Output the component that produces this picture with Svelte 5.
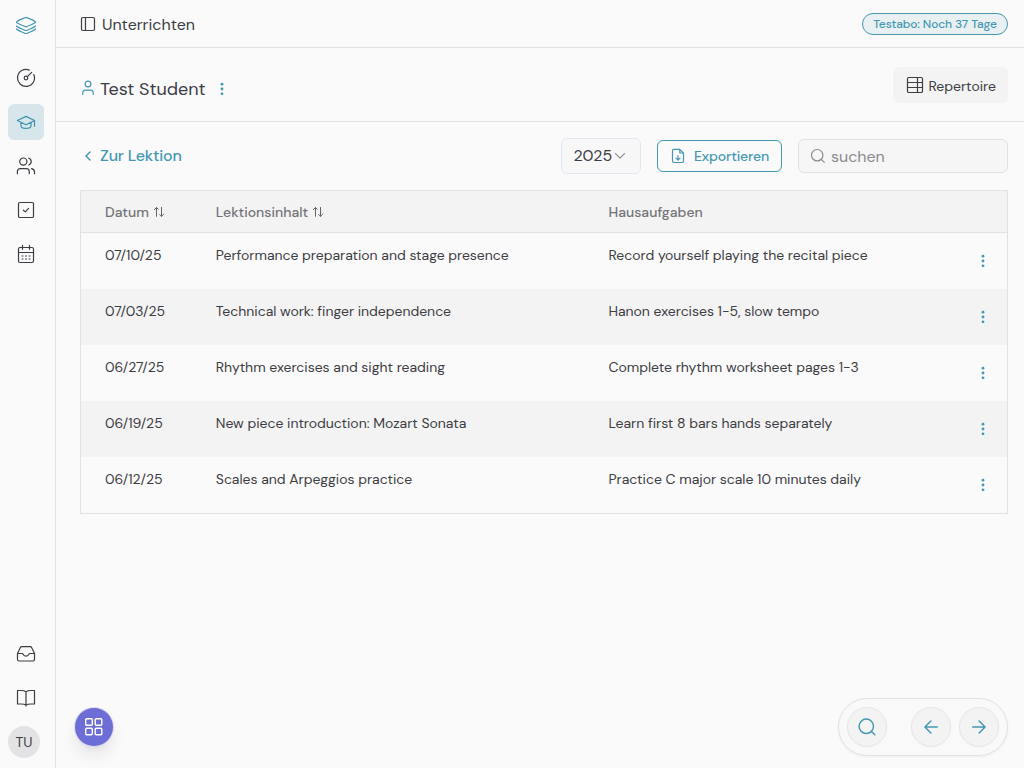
<script>
  const rows = [
    ['07/10/25', 'Performance preparation and stage presence', 'Record yourself playing the recital piece'],
    ['07/03/25', 'Technical work: finger independence', 'Hanon exercises 1-5, slow tempo'],
    ['06/27/25', 'Rhythm exercises and sight reading', 'Complete rhythm worksheet pages 1-3'],
    ['06/19/25', 'New piece introduction: Mozart Sonata', 'Learn first 8 bars hands separately'],
    ['06/12/25', 'Scales and Arpeggios practice', 'Practice C major scale 10 minutes daily']
  ];
</script>

{#snippet dots()}
  <svg class="dots" width="4" height="14" viewBox="0 0 4 14"><circle cx="2" cy="2.2" r="1.400" /><circle cx="2" cy="7" r="1.400" /><circle cx="2" cy="11.8" r="1.400" /></svg>
{/snippet}

{#snippet sort()}
  <svg class="ico sort" width="12" height="12" viewBox="0 0 12 12"><path d="M3.500 10.300V1.500M1.300 3.700 3.500 1.500 5.300 3.300M8.500 1.500v8.800M6.700 8.500l1.800 1.800 2.200-2.200" /></svg>
{/snippet}

<div class="app">
  <nav class="side">
    <a class="logo" href="#home" aria-label="Home">
      <svg class="ico" width="22" height="20" viewBox="0 0 22 20"><path d="M11 2.400c.5 0 8.300 3.300 9.200 4.200.4.4.4.7 0 1-.9.900-8.300 4.200-9.200 4.200s-8.300-3.300-9.200-4.200c-.4-.3-.4-.6 0-1C2.700 5.700 10.500 2.400 11 2.400ZM1.500 11c1 1.200 8.600 4.500 9.500 4.500s8.500-3.300 9.500-4.500M1.500 14c1 1.200 8.600 4.500 9.500 4.500s8.500-3.300 9.500-4.500" /></svg>
    </a>
    <a class="item" href="#dashboard" aria-label="Dashboard">
      <svg class="ico" width="20" height="20" viewBox="0 0 20 20"><path d="M13.300 2.100A8.500 8.500 0 1 0 17.800 6.500M15.700 4.300 11.300 8.700" /><circle cx="10" cy="10" r="1.800" /></svg>
    </a>
    <a class="item active" href="#teach" aria-label="Unterrichten">
      <svg class="ico" width="20" height="20" viewBox="0 0 20 20"><path d="M1.400 8.500 10 4.400l8.600 4.100-8.600 4.300ZM18.500 8.700v5.500M5 10.600v3.300c0 1.600 2.200 2.400 5 2.400s5-.8 5-2.400v-3.300" /></svg>
    </a>
    <a class="item" href="#students" aria-label="Students">
      <svg class="ico" width="20" height="20" viewBox="0 0 20 20"><circle cx="7.300" cy="5.600" r="3.600" /><path d="M1.400 17.700v-2.100c0-1.700 1.300-3 3-3h5.900c1.700 0 3 1.300 3 3v2.100M12.800 2.200a3.600 3.600 0 0 1 0 6.800M15.500 12.700c1.800.4 3 1.500 3 3.300v1.700" /></svg>
    </a>
    <a class="item" href="#tasks" aria-label="Tasks">
      <svg class="ico" width="20" height="20" viewBox="0 0 20 20"><rect x="2.500" y="2.500" width="15" height="15" rx="1.300" /><path d="m7.400 10.200 1.900 1.700 3.300-3.500" /></svg>
    </a>
    <a class="item" href="#calendar" aria-label="Calendar">
      <svg class="ico" width="20" height="20" viewBox="0 0 20 20"><rect x="2.500" y="3.500" width="15" height="15" rx="1.500" /><path d="M2.500 8.500h15M6.500 1.300v4M13.500 1.300v4" /><path class="days" d="M6 12h1M9.500 12h1M13 12h1M6 15h1M9.500 15h1M13 15h1" /></svg>
    </a>
    <a class="item low" href="#inbox" aria-label="Inbox">
      <svg class="ico" width="20" height="20" viewBox="0 0 20 20"><path d="M1.500 9.500 4.400 3.600c.3-.6.7-.9 1.300-.9h8.600c.6 0 1 .3 1.300.9l2.900 5.900v6c0 1-.6 1.500-1.500 1.500H3c-.9 0-1.500-.5-1.500-1.500v-6h4.700c.5 0 .7.200.9.700.4 1.400 1.500 2 2.900 2s2.500-.6 2.900-2c.2-.5.4-.7.9-.7h4.700" /></svg>
    </a>
    <a class="item" href="#help" aria-label="Help">
      <svg class="ico" width="20" height="20" viewBox="0 0 20 20"><path d="M10 3.800v14.200M10 3.800C8.700 2.500 7 2.500 4.500 2.500h-3v13.500H5c2.200 0 3.900.3 5 1 1.100-.7 2.800-1 5-1h3.500V2.500h-3c-2.500 0-4.200 0-5.500 1.300Z" /></svg>
    </a>
    <div class="avatar">TU</div>
  </nav>

  <div class="main">
    <header class="top">
      <svg class="ico" width="16" height="16" viewBox="0 0 16 16"><rect x="1.500" y="1.500" width="13" height="13" rx="1.500" /><path d="M5.500 1.500v13" /></svg>
      <h1>Unterrichten</h1>
      <span class="trial">Testabo: Noch 37 Tage</span>
    </header>

    <section class="student">
      <svg class="ico person" width="14" height="16" viewBox="0 0 14 16"><circle cx="7" cy="4" r="2.900" /><path d="M1.700 14.500v-1.300c0-1.900 1.300-3.100 3.100-3.100h4.400c1.800 0 3.100 1.200 3.100 3.100v1.300" /></svg>
      <h2>Test Student</h2>
      {@render dots()}
      <button class="repertoire">
        <svg class="ico" width="18" height="18" viewBox="0 0 18 18"><rect x="1.500" y="1.500" width="15" height="15" rx="1.300" /><path d="M1.500 6.500h15M1.500 11.500h15M11.500 1.500v15" /></svg>
        <span>Repertoire</span>
      </button>
    </section>

    <section class="tools">
      <a class="back" href="#lesson">
        <svg class="ico" width="8" height="12" viewBox="0 0 8 12"><path d="M6 2 2 6l4 4" /></svg>
        <span>Zur Lektion</span>
      </a>
      <button class="year"><span>2025</span><svg class="ico" width="12" height="8" viewBox="0 0 12 8"><path d="m1.500 1.700 4.500 4.500 4.500-4.500" /></svg></button>
      <button class="export">
        <svg class="ico" width="14" height="16" viewBox="0 0 14 16"><path d="M8.800 1.300H2.900c-.9 0-1.400.5-1.400 1.400v10.400c0 .9.500 1.400 1.400 1.400h8.200c.9 0 1.400-.5 1.400-1.400V5ZM8.800 1.300V5h3.700M7 7.500v4.300M5 10.200l2 2 2-2" /></svg>
        <span>Exportieren</span>
      </button>
      <label class="search">
        <svg class="ico" width="16" height="16" viewBox="0 0 16 16"><circle cx="7.200" cy="7.200" r="5.700" /><path d="m11.300 11.300 3 3" /></svg>
        <span>suchen</span>
      </label>
    </section>

    <div class="table">
      <div class="row head">
        <div><span>Datum</span>{@render sort()}</div>
        <div><span>Lektionsinhalt</span>{@render sort()}</div>
        <div><span>Hausaufgaben</span></div>
      </div>
      {#each rows as [date, content, homework]}
        <div class="row">
          <span>{date}</span>
          <span>{content}</span>
          <span>{homework}</span>
          {@render dots()}
        </div>
      {/each}
    </div>
  </div>

  <button class="fab" aria-label="Apps">
    <svg class="ico" width="20" height="20" viewBox="0 0 20 20"><rect x="1.700" y="1.700" width="6.600" height="6.600" rx="1" /><rect x="11.200" y="1.700" width="6.600" height="6.600" rx="1" /><rect x="1.700" y="11.200" width="6.600" height="6.600" rx="1" /><rect x="11.200" y="11.200" width="6.600" height="6.600" rx="1" /></svg>
  </button>

  <div class="pager">
    <button aria-label="Search"><svg class="ico" width="20" height="20" viewBox="0 0 20 20"><circle cx="9.300" cy="9.300" r="7.200" /><path d="m14.500 14.500 3.300 3.300" /></svg></button>
    <button class="prev" aria-label="Previous"><svg class="ico" width="16" height="16" viewBox="0 0 16 16"><path d="M14.300 8H1.900M7.900 2 1.900 8l6 6" /></svg></button>
    <button aria-label="Next"><svg class="ico" width="16" height="16" viewBox="0 0 16 16"><path d="M1.700 8h12.400M8.100 2l6 6-6 6" /></svg></button>
  </div>
</div>

<style>
  :global(body) { background: #fafafa; overflow: hidden; }
  .app { display: flex; width: 1024px; height: 768px; box-sizing: border-box; background: #fafafa; color: #3d3d44; font: 14px/20px "DM Sans", Inter, sans-serif; letter-spacing: -0.025px; }
  .app * { box-sizing: border-box; }
  a { color: inherit; text-decoration: none; }
  button { font: inherit; letter-spacing: inherit; color: inherit; padding: 0; margin: 0; border: 0; background: none; }
  .ico { fill: none; stroke: currentColor; stroke-width: 1.2; stroke-linecap: round; stroke-linejoin: round; flex: none; display: block; }
  .ico .days { stroke-width: 1; }
  .dots { fill: #4598b2; flex: none; display: block; }

  .side { width: 56px; border-right: 1px solid #e2e2e3; padding: 15px 8px 10px; display: flex; flex-direction: column; gap: 8px; flex: none; }
  .logo { color: #4598b2; height: 37px; padding-left: 7px; }
  .item { width: 36px; height: 36px; display: grid; place-items: center; border-radius: 6px; flex: none; }
  .item.active { background: #d7e6ea; color: #3f93ae; }
  .low { margin-top: auto; }
  .avatar { width: 32px; height: 32px; margin-top: 2px; border-radius: 50%; background: #e3e3e5; display: grid; place-items: center; font-size: 14px; flex: none; }

  .main { flex: 1; min-width: 0; }
  .top { height: 48px; border-bottom: 1px solid #e2e2e3; padding: 0 16px 0 24px; display: flex; align-items: center; }
  h1, h2 { margin: 0; font-weight: 400; }
  h1 { font-size: 16px; margin-left: 6px; padding-top: 2px; letter-spacing: -0.02px; }
  .trial { margin-left: auto; width: 146px; height: 22px; border: 1px solid #4598b2; border-radius: 11px; background: #e8f0f2; color: #4598b2; font-weight: 500; font-size: 12px; line-height: 20px; text-align: center; white-space: nowrap; letter-spacing: -0.11px; }
  .student { height: 74px; border-bottom: 1px solid #e2e2e3; padding: 0 16px 0 25px; display: flex; align-items: center; }
  .person { color: #4598b2; margin-top: 7px; }
  h2 { font-size: 18px; line-height: 24px; margin: 8px 14px 0 5px; }
  .student > .dots { margin-top: 8px; }
  .repertoire { margin-left: auto; width: 115px; height: 36px; border-radius: 6px; background: #f3f3f3; display: flex; align-items: center; gap: 4.500px; padding-left: 13px; }
  .repertoire span { padding-top: 2px; }

  .tools { height: 68px; padding: 0 16px 0 28px; display: flex; align-items: center; }
  .back { color: #4598b2; display: flex; align-items: center; gap: 8px; font-size: 16px; font-weight: 500; margin-right: auto; letter-spacing: -0.2px; }
  .back .ico { stroke-width: 1.5; }
  .year { width: 80px; height: 36px; border: 1px solid #e2e7ef; border-radius: 6px; background: #f7f7f7; display: flex; align-items: center; gap: 2px; padding-left: 11.500px; font-size: 16px; letter-spacing: 0; }
  .year .ico { color: #8b8b90; }
  .export { width: 125px; height: 32px; border: 1px solid #4598b2; border-radius: 6px; color: #4598b2; margin: 0 16px; display: flex; align-items: center; gap: 9px; padding-left: 13px; font-weight: 500; letter-spacing: -0.14px; }
  .search { width: 210px; height: 34px; border: 1px solid #e2e2e3; border-radius: 6px; background: #f6f6f6; color: #8b8b8e; display: flex; align-items: center; gap: 5px; padding-left: 11px; font-size: 16px; }
  .search span { padding-top: 1px; }

  .table { width: 928px; margin-left: 24px; border: 1px solid #e2e2e3; }
  .row { height: 56px; display: grid; grid-template-columns: 110.800px 392.700px 372.500px 1fr; padding: 12px 0 0 24px; white-space: nowrap; }
  .row:nth-child(odd) { background: #f3f3f3; }
  .row .dots { margin-top: 9px; }
  .row.head { height: 42px; border-bottom: 1px solid #e2e2e3; padding-top: 11px; color: #737378; font-weight: 500; letter-spacing: 0.01px; }
  .head div { display: flex; align-items: center; gap: 4px; height: 20px; }
  .head .sort { color: #626268; stroke-width: 1; }

  .fab { position: absolute; left: 75px; top: 708px; width: 38px; height: 38px; border-radius: 50%; background: #6d6dd6; color: #fff; display: grid; place-items: center; box-shadow: 0 0 0 1px #d8d8ee, 0 10px 15px 0 #00000014, 0 4px 6px -4px #0000001a; }
  .fab .ico { stroke-width: 1.4; }
  .pager { position: absolute; left: 838px; top: 698px; width: 170px; height: 58px; border: 1px solid #e2e2e3; border-radius: 29px; background: #f9f9f9; display: flex; align-items: center; gap: 8px; padding-left: 8px; box-shadow: 0 1px 3px #0000000d; }
  .pager button { width: 40px; height: 40px; border: 1px solid #e4e4e5; border-radius: 50%; background: #f3f3f3; color: #4598b2; display: grid; place-items: center; }
  .pager .ico { stroke-width: 1.500; }
  .pager .prev { margin-left: 16px; }
</style>
